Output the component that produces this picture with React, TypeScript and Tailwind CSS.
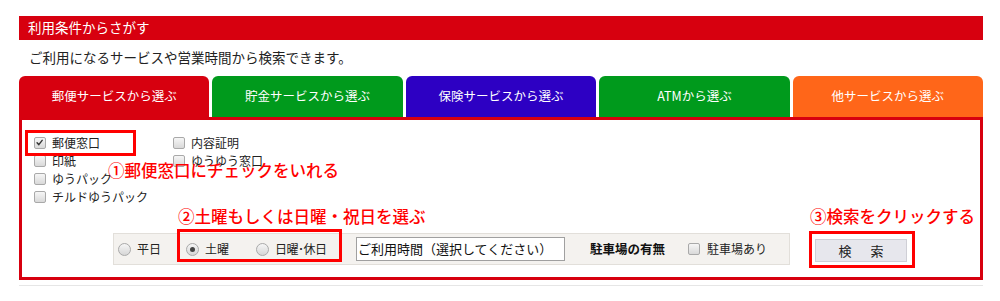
import React from "react";

const tabs = [
  { label: "郵便サービスから選ぶ", bg: "bg-[#d7000f]" },
  { label: "貯金サービスから選ぶ", bg: "bg-[#009a1c]" },
  { label: "保険サービスから選ぶ", bg: "bg-[#2d00c3]" },
  { label: "ATMから選ぶ", bg: "bg-[#009a1c]" },
  { label: "他サービスから選ぶ", bg: "bg-[#ff6619]" },
];

function Check({ checked = false }: { checked?: boolean }) {
  return (
    <span className="relative inline-block w-[12px] h-[12px] shrink-0 rounded-[2px] border border-[#a9a9a9] bg-gradient-to-b from-[#f6f6f6] to-[#d9d9d9]">
      {checked && (
        <svg viewBox="0 0 12 12" className="absolute left-[0px] top-[0px] w-[10px] h-[10px]">
          <path d="M2.5 5.8 L4.6 8 L8.6 2.8" fill="none" stroke="#333" strokeWidth="1.7" strokeLinecap="round" strokeLinejoin="round" />
        </svg>
      )}
    </span>
  );
}

function Radio({ on = false }: { on?: boolean }) {
  return (
    <span className="relative flex items-center justify-center w-[13px] h-[13px] shrink-0 rounded-full border border-[#a9a9a9] bg-gradient-to-b from-[#f6f6f6] to-[#d6d6d6]">
      {on && <span className="block w-[5px] h-[5px] rounded-full bg-[#444]" />}
    </span>
  );
}

function CheckItem({ label, checked = false }: { label: string; checked?: boolean }) {
  return (
    <div className="flex items-center h-[18px] gap-[6px] text-[12px] text-[#222]">
      <Check checked={checked} />
      <span>{label}</span>
    </div>
  );
}

export default function App() {
  return (
    <div className="w-[1000px] h-[301px] bg-white pt-[16px] pl-[19px] pr-[17px] font-['Noto_Sans_CJK_JP','Noto_Sans',sans-serif]">
      <div className="h-[24px] bg-[#d7000f] flex items-center pl-[9px] text-white text-[13.5px] leading-none">
        利用条件からさがす
      </div>
      <div className="h-[36px] flex items-center pl-[10px] text-[13.5px] text-[#222] leading-none">
        ご利用になるサービスや営業時間から検索できます。
      </div>
      <div className="flex gap-[3px] h-[41px]">
        {tabs.map((t) => (
          <div
            key={t.label}
            className={`flex-1 ${t.bg} rounded-t-[6px] flex items-center justify-center text-white text-[12.5px] leading-none`}
          >
            {t.label}
          </div>
        ))}
      </div>
      <div className="relative h-[163px] border-[3px] border-[#d7000f] bg-white">
        <div className="flex pl-[12px] pt-[14px]">
          <div className="w-[139px]">
            <CheckItem label="郵便窓口" checked />
            <CheckItem label="印紙" />
            <CheckItem label="ゆうパック" />
            <CheckItem label="チルドゆうパック" />
          </div>
          <div>
            <CheckItem label="内容証明" />
            <CheckItem label="ゆうゆう窓口" />
          </div>
        </div>
        <div className="flex items-center mt-[27px] ml-[91px]">
          <div className="flex items-center h-[32px] w-[677px] bg-[#f4f2ef] border border-[#e2dfda] pl-[4px] text-[12px] text-[#222]">
            <div className="flex items-center gap-[6px] w-[68px]">
              <Radio />
              <span>平日</span>
            </div>
            <div className="flex items-center gap-[6px] w-[70px]">
              <Radio on />
              <span>土曜</span>
            </div>
            <div className="flex items-center gap-[6px] w-[100px]">
              <Radio />
              <span className="tracking-[-0.5px]">日曜･休日</span>
            </div>
            <div className="w-[209px] h-[24px] bg-white border border-[#a0a0a0] flex items-center pl-[1px] text-[13px] text-[#111] whitespace-nowrap overflow-hidden">
              ご利用時間（選択してください）
            </div>
            <div className="ml-[25px] w-[98px] font-bold text-[12.5px] text-[#111]">駐車場の有無</div>
            <div className="flex items-center gap-[7px]">
              <Check />
              <span>駐車場あり</span>
            </div>
          </div>
          <div className="ml-[25px] mt-[3px] w-[92px] h-[23px] bg-[#e7e7ed] border border-[#cfcfd6] flex items-center justify-center text-[13px] text-[#222] tracking-[3px]">
            <span className="pl-[3px]">検　索</span>
          </div>
        </div>

        {/* annotations */}
        <div className="absolute left-[3px] top-[10px] w-[111px] h-[26px] border-[3px] border-[#ff0000]" />
        <div className="absolute left-[86px] top-[40px] text-[16.5px] leading-[20px] font-medium text-[#ff0000] whitespace-nowrap">
          ①郵便窓口にチェックをいれる
        </div>
        <div className="absolute left-[156px] top-[86px] text-[16.5px] leading-[20px] font-medium text-[#ff0000] whitespace-nowrap">
          ②土曜もしくは日曜・祝日を選ぶ
        </div>
        <div className="absolute left-[155px] top-[109px] w-[165px] h-[33px] border-[3px] border-[#ff0000]" />
        <div className="absolute left-[788px] top-[86px] text-[16.5px] leading-[20px] font-medium text-[#ff0000] whitespace-nowrap">
          ③検索をクリックする
        </div>
        <div className="absolute left-[787px] top-[111px] w-[106px] h-[37px] border-[3px] border-[#ff0000]" />
      </div>
      <div className="mt-[5px] h-[1px] bg-[#e6e6e6]" />
    </div>
  );
}
